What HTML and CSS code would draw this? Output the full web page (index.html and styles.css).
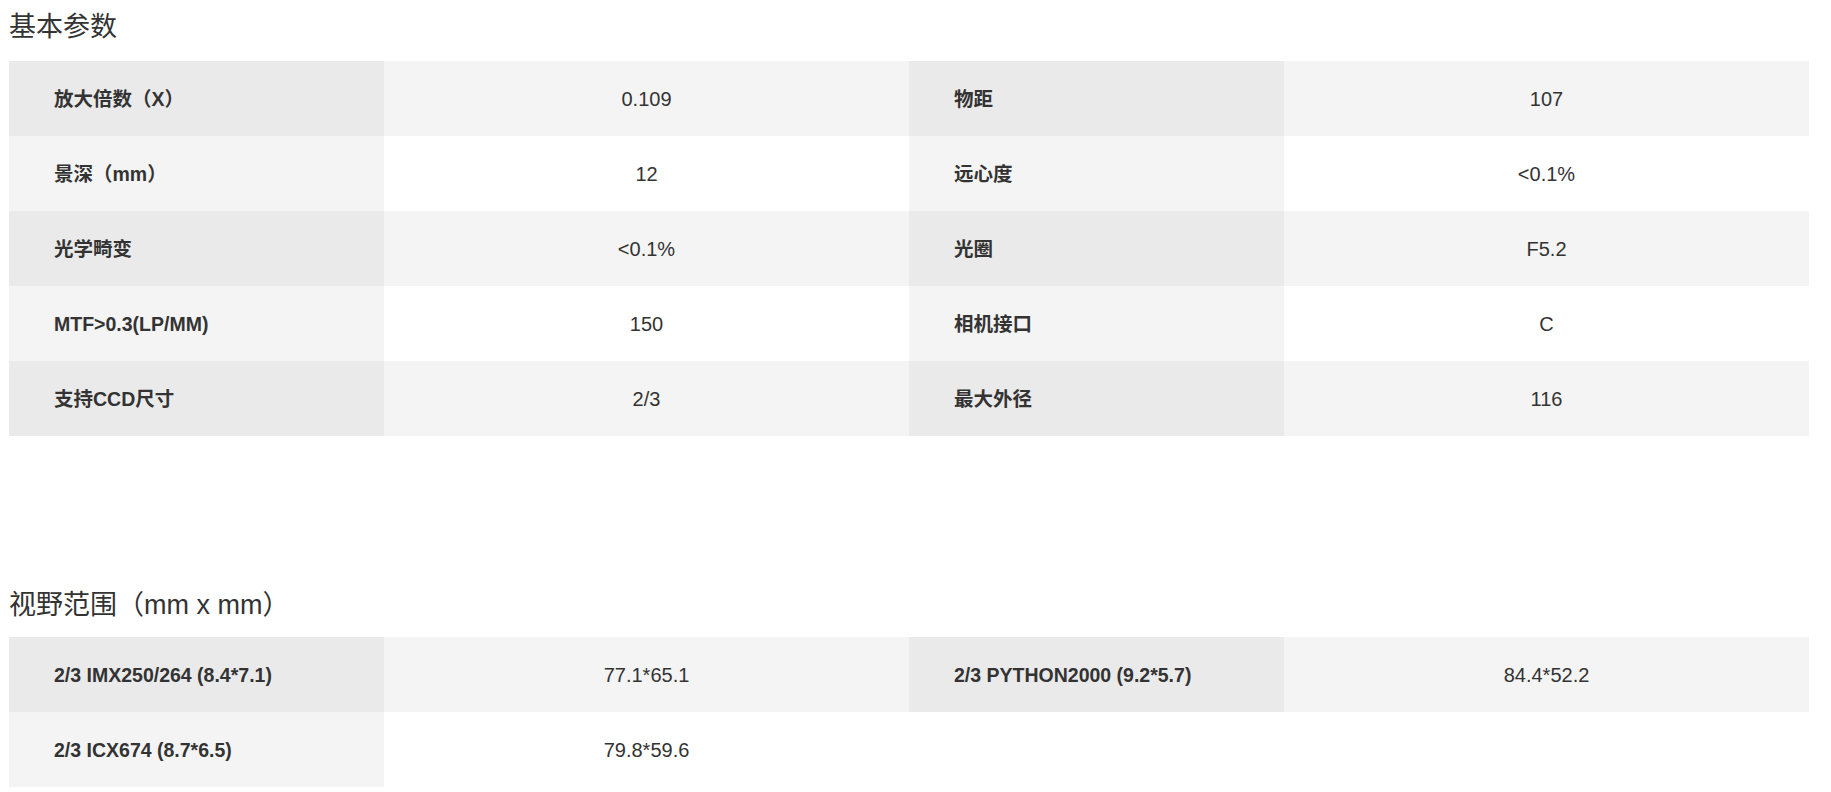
FILE: index.html
```html
<!DOCTYPE html>
<html lang="zh">
<head>
<meta charset="utf-8">
<title>参数</title>
<link rel="stylesheet" href="styles.css">
</head>
<body>
<section class="section">
  <h2 class="title">基本参数</h2>
  <table class="spec">
    <colgroup><col class="c1"><col class="c2"><col class="c3"><col class="c4"></colgroup>
    <tbody>
      <tr><th>放大倍数（X）</th><td>0.109</td><th>物距</th><td>107</td></tr>
      <tr><th>景深（mm）</th><td>12</td><th>远心度</th><td>&lt;0.1%</td></tr>
      <tr><th>光学畸变</th><td>&lt;0.1%</td><th>光圈</th><td>F5.2</td></tr>
      <tr><th>MTF&gt;0.3(LP/MM)</th><td>150</td><th>相机接口</th><td>C</td></tr>
      <tr><th>支持CCD尺寸</th><td>2/3</td><th>最大外径</th><td>116</td></tr>
    </tbody>
  </table>
</section>
<section class="section second">
  <h2 class="title">视野范围（mm x mm）</h2>
  <table class="spec">
    <colgroup><col class="c1"><col class="c2"><col class="c3"><col class="c4"></colgroup>
    <tbody>
      <tr><th>2/3 IMX250/264 (8.4*7.1)</th><td>77.1*65.1</td><th>2/3 PYTHON2000 (9.2*5.7)</th><td>84.4*52.2</td></tr>
      <tr><th>2/3 ICX674 (8.7*6.5)</th><td>79.8*59.6</td></tr>
    </tbody>
  </table>
</section>
</body>
</html>
```
FILE: styles.css
```css
html, body {
  margin: 0;
  padding: 0;
  background: #fff;
}
body {
  padding: 0 9px;
  font-family: "Liberation Sans", "Noto Sans CJK SC", Arial, sans-serif;
  color: #333;
}
.title {
  margin: 9px 0 16px;
  font-size: 27px;
  line-height: 36px;
  font-weight: normal;
  color: #333;
}
.second {
  margin-top: 151px;
}
.second .title {
  margin: 0 0 14px;
}
.spec {
  width: 1800px;
  border-collapse: collapse;
  border-spacing: 0;
  table-layout: fixed;
}
.c1, .c3 { width: 375px; }
.c2, .c4 { width: 525px; }
.spec th, .spec td {
  height: 75px;
  padding: 0;
  font-size: 20px;
  line-height: 24px;
  vertical-align: middle;
  color: #333;
}
.spec th {
  text-align: left;
  padding-left: 45px;
  font-size: 19.5px;
  font-weight: bold;
}
.spec td {
  text-align: center;
  font-weight: normal;
}
.spec tr:nth-child(odd) th { background: #eaeaea; }
.spec tr:nth-child(odd) td { background: #f4f4f4; }
.spec tr:nth-child(even) th { background: #f4f4f4; }
.spec tr:nth-child(even) td { background: #fff; }
```
